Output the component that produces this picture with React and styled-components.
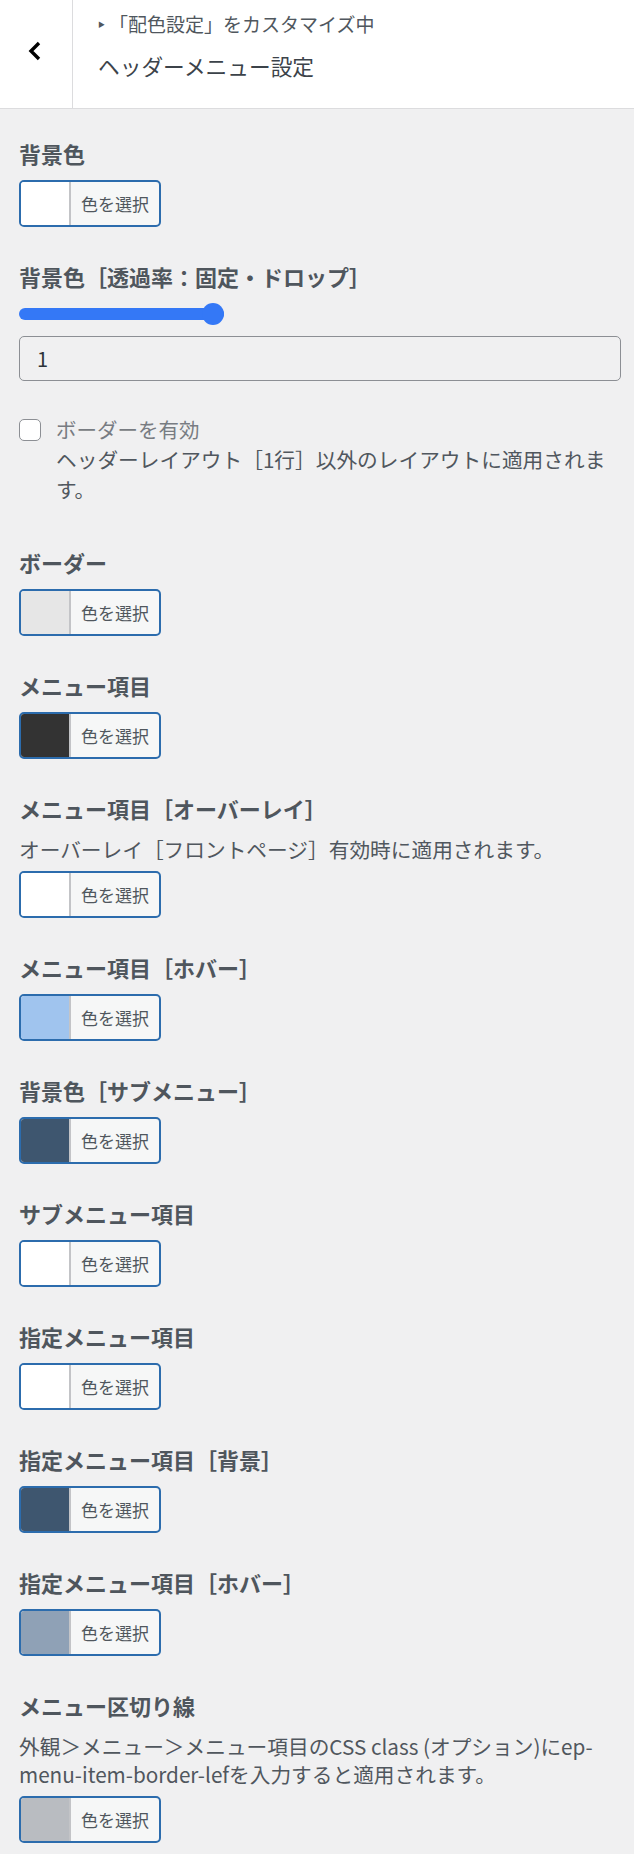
import React, { useState } from "react";
import styled, { createGlobalStyle } from "styled-components";

const GlobalStyle = createGlobalStyle`
    html, body {
        margin: 0;
        padding: 0;
        background: #f0f0f1;
    }
    body {
        font-family: "Noto Sans CJK JP", "Noto Sans", sans-serif;
        color: #50575e;
    }
    * {
        box-sizing: border-box;
    }
`

const Page = styled.div`
    width: 634px;
    min-height: 1854px;
    background: #f0f0f1;
`

const Header = styled.div`
    display: flex;
    height: 109px;
    background: #fff;
    border-bottom: 1px solid #dcdcde;
`

const BackButton = styled.button`
    display: flex;
    align-items: center;
    justify-content: center;
    width: 73px;
    padding: 0 2px 6px 0;
    background: none;
    border: none;
    border-right: 1px solid #dcdcde;
    cursor: pointer;
`

const HeaderText = styled.div`
    display: flex;
    flex-direction: column;
    padding: 11px 0 0 25px;
`

const Crumb = styled.div`
    display: flex;
    align-items: center;
    font-size: 19px;
    line-height: 26px;
    color: #50575e;
`

const CrumbArrow = styled.span`
    font-size: 7px;
    color: #50575e;
    margin-right: 4px;
`

const PanelTitle = styled.div`
    margin-top: 14px;
    font-size: 21.7px;
    line-height: 30px;
    color: #3c434a;
`

const Content = styled.div`
    padding: 29px 13px 20px 19px;
`

const Section = styled.div`
    display: flex;
    flex-direction: column;
    align-items: flex-start;
    margin-bottom: ${(p) => p.$gap || 34}px;
`

const Label = styled.div`
    font-size: 22px;
    font-weight: 700;
    line-height: 30px;
    color: #4f565d;
    margin-bottom: 12px;
`

const Desc = styled.div`
    font-size: 20.7px;
    line-height: 28px;
    color: #50575e;
    margin-bottom: 8px;
`

const ColorButton = styled.button`
    display: flex;
    width: 142px;
    height: 47px;
    padding: 0;
    border: 2px solid #2c6cad;
    border-radius: 5px;
    overflow: hidden;
    background: #f6f7f7;
    cursor: pointer;
`

const Swatch = styled.span`
    width: 50px;
    height: 100%;
    background: ${(p) => p.$color};
    border-right: 2px solid #c3c4c7;
`

const ButtonText = styled.span`
    flex: 1;
    display: flex;
    align-items: center;
    justify-content: center;
    font-family: "Noto Sans CJK JP", sans-serif;
    font-size: 17px;
    color: #50575e;
`

const Range = styled.input`
    -webkit-appearance: none;
    appearance: none;
    width: 205px;
    height: 22px;
    margin: 0;
    background: transparent;

    &::-webkit-slider-runnable-track {
        height: 12px;
        border-radius: 6px;
        background: #3478f6;
    }
    &::-webkit-slider-thumb {
        -webkit-appearance: none;
        width: 22px;
        height: 22px;
        margin-top: -5px;
        border-radius: 50%;
        background: #3478f6;
        border: none;
    }
`

const NumberInput = styled.input`
    width: 602px;
    height: 45px;
    margin-top: 11px;
    padding: 0 17px;
    border: 1px solid #8c8f94;
    border-radius: 5px;
    background: transparent;
    font-family: "Noto Sans CJK JP", "Noto Sans", sans-serif;
    font-size: 20px;
    color: #2c3338;
    outline: none;
`

const CheckRow = styled.label`
    display: flex;
    align-items: center;
    gap: 15px;
    margin-top: 34px;
    font-size: 20.5px;
    line-height: 29px;
    color: #787c82;
`

const CheckBox = styled.span`
    width: 22px;
    height: 22px;
    border: 1.5px solid #8c8f94;
    border-radius: 5px;
    background: #fff;
`

const CheckDesc = styled.div`
    padding-left: 37px;
    font-size: 20.7px;
    line-height: 30px;
    color: #50575e;
`

const ChevronLeft = () => (
    <svg width="18" height="22" viewBox="0 0 18 22">
        <path d="M13 3 L5 11 L13 19" fill="none" stroke="#000" strokeWidth="3.4" />
    </svg>
)

const ColorControl = ({ label, desc, color, gap }) => (
    <Section $gap={gap}>
        <Label>{label}</Label>
        {desc && <Desc>{desc}</Desc>}
        <ColorButton>
            <Swatch $color={color} />
            <ButtonText>色を選択</ButtonText>
        </ColorButton>
    </Section>
)

const colors = [
    { label: "ボーダー", color: "#e6e6e6" },
    { label: "メニュー項目", color: "#333333" },
    { label: "メニュー項目［オーバーレイ］", desc: "オーバーレイ［フロントページ］有効時に適用されます。", color: "#ffffff" },
    { label: "メニュー項目［ホバー］", color: "#a0c4ee" },
    { label: "背景色［サブメニュー］", color: "#3e566f" },
    { label: "サブメニュー項目", color: "#ffffff" },
    { label: "指定メニュー項目", color: "#ffffff" },
    { label: "指定メニュー項目［背景］", color: "#3e566f" },
    { label: "指定メニュー項目［ホバー］", color: "#8fa1b6" },
    {
        label: "メニュー区切り線",
        desc: "外観＞メニュー＞メニュー項目のCSS class (オプション)にep-menu-item-border-lefを入力すると適用されます。",
        color: "#b9bcc1",
    },
]

const App = () => {
    const [opacity, setOpacity] = useState(1);

    return (
        <Page>
            <GlobalStyle />
            <Header>
                <BackButton aria-label="戻る">
                    <ChevronLeft />
                </BackButton>
                <HeaderText>
                    <Crumb>
                        <CrumbArrow>▶</CrumbArrow>「配色設定」をカスタマイズ中
                    </Crumb>
                    <PanelTitle>ヘッダーメニュー設定</PanelTitle>
                </HeaderText>
            </Header>

            <Content>
                <ColorControl label="背景色" color="#ffffff" />

                <Section $gap={43}>
                    <Label>背景色［透過率：固定・ドロップ］</Label>
                    <Range
                        type="range"
                        min="0"
                        max="1"
                        step="0.1"
                        value={opacity}
                        onChange={(e) => setOpacity(e.target.value)}
                    />
                    <NumberInput
                        type="text"
                        value={opacity}
                        onChange={(e) => setOpacity(e.target.value)}
                    />
                    <CheckRow>
                        <CheckBox />
                        ボーダーを有効
                    </CheckRow>
                    <CheckDesc>ヘッダーレイアウト［1行］以外のレイアウトに適用されます。</CheckDesc>
                </Section>

                {colors.map((c) => (
                    <ColorControl key={c.label} {...c} />
                ))}
            </Content>
        </Page>
    )
}

export default App;
